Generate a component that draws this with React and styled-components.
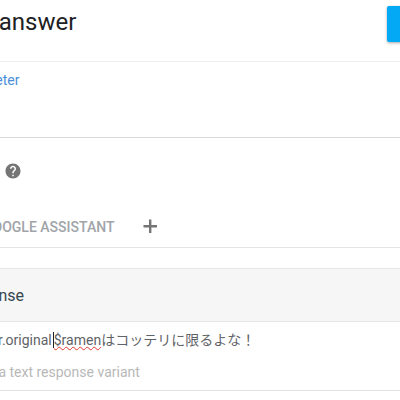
import React from "react";
import styled, { createGlobalStyle } from "styled-components";

const Global = createGlobalStyle`
  html, body {
    margin: 0;
    padding: 0;
    background: #fff;
    overflow: hidden;
  }
  body {
    font-family: Roboto, "Noto Sans CJK JP", sans-serif;
  }
`;

const Page = styled.div`
  width: 400px;
  height: 400px;
  overflow: hidden;
  display: flex;
  flex-direction: column;
`;

const Header = styled.div`
  height: 61px;
  display: flex;
  align-items: flex-start;
  justify-content: space-between;
  border-bottom: 1px solid #eee;
`;

const Title = styled.h1`
  margin: 6px 0 0 -50px;
  font-size: 24px;
  line-height: 32px;
  font-weight: 400;
  color: #202124;
  white-space: nowrap;
`;

const SaveButton = styled.button`
  width: 30px;
  height: 36px;
  margin-top: 6px;
  margin-right: -17px;
  border: 0;
  border-radius: 2px;
  background: #03a9f4;
  box-shadow: 0 1px 3px rgba(0, 0, 0, 0.35);
`;

const ParamSection = styled.div`
  height: 76px;
  padding-top: 9px;
  box-sizing: border-box;
  border-bottom: 1px solid #dcd8d8;
`;

const ParamLink = styled.a`
  display: block;
  margin-left: -73px;
  font-size: 14px;
  line-height: 18px;
  color: #4a90d9;
  white-space: nowrap;
`;

const HelpRow = styled.div`
  height: 66px;
  padding-top: 24px;
  padding-left: 4px;
  box-sizing: border-box;
`;

const TabRow = styled.div`
  height: 44px;
  padding-top: 2px;
  box-sizing: border-box;
  display: flex;
  align-items: center;
  border-bottom: 1px solid #e4e4e4;
`;

const TabLabel = styled.span`
  margin-left: -17px;
  font-size: 14px;
  font-weight: 500;
  color: #a0a4a8;
  white-space: nowrap;
`;

const AddIcon = styled.svg`
  margin-left: 26px;
  margin-top: -2px;
`;

const ResponseBand = styled.div`
  height: 54px;
  margin-top: 20px;
  display: flex;
  align-items: center;
  box-sizing: border-box;
  background: #f6f6f6;
  border-top: 1px solid #e6e6e6;
  border-bottom: 1px solid #e6e6e6;
`;

const BandTitle = styled.span`
  margin-left: -76px;
  font-size: 16px;
  color: #37474f;
  white-space: nowrap;
`;

const VariantList = styled.div`
  height: 69px;
  border-bottom: 1px solid #e0e0e0;
  box-sizing: border-box;
`;

const VariantRow = styled.div`
  height: 36px;
  padding-top: 7px;
  box-sizing: border-box;
  margin-left: -40px;
  font-size: 14px;
  line-height: 22px;
  color: #5f6368;
  white-space: nowrap;
`;

const Caret = styled.span`
  border-left: 1px solid #202124;
  margin-left: 1px;
`;

const Misspelled = styled.span`
  text-decoration: underline wavy #e53935 1px;
`;

const Placeholder = styled.div`
  margin-left: -30px;
  padding-top: 4px;
  font-size: 14px;
  line-height: 20px;
  color: #b8b8b8;
  white-space: nowrap;
`;

export default function App() {
  return (
    <Page>
      <Global />
      <Header>
        <Title>Add answer</Title>
        <SaveButton />
      </Header>
      <ParamSection>
        <ParamLink>Add parameter</ParamLink>
      </ParamSection>
      <HelpRow>
        <svg width="18" height="18" viewBox="0 0 24 24" fill="#757575">
          <path d="M12 2C6.48 2 2 6.48 2 12s4.48 10 10 10 10-4.48 10-10S17.52 2 12 2zm1 17h-2v-2h2v2zm2.07-7.75l-.9.92C13.45 12.9 13 13.5 13 15h-2v-.5c0-1.1.45-2.1 1.17-2.83l1.24-1.26c.37-.36.59-.86.59-1.41 0-1.1-.9-2-2-2s-2 .9-2 2H8c0-2.21 1.79-4 4-4s4 1.79 4 4c0 .88-.36 1.68-.93 2.25z" />
        </svg>
      </HelpRow>
      <TabRow>
        <TabLabel>GOOGLE ASSISTANT</TabLabel>
        <AddIcon width="20" height="20" viewBox="0 0 20 20" fill="#757575">
          <path d="M9 3.5h2.4V9H17v2.4h-5.6V17H9v-5.6H3.5V9H9z" />
        </AddIcon>
      </TabRow>
      <ResponseBand>
        <BandTitle>Text response</BandTitle>
      </ResponseBand>
      <VariantList>
        <VariantRow>
          $flavor.original<Caret />
          <Misspelled>$ramen</Misspelled>はコッテリに限るよな！
        </VariantRow>
        <Placeholder>Add a text response variant</Placeholder>
      </VariantList>
    </Page>
  );
}
